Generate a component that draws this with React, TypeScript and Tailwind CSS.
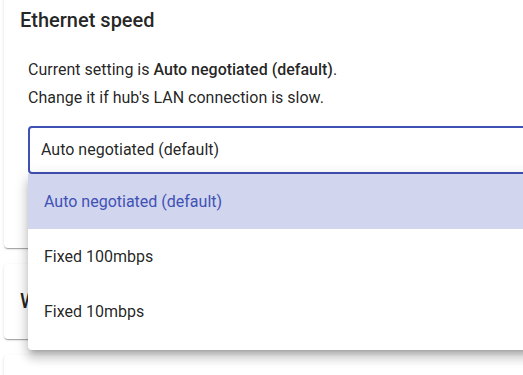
const cardShadow =
  'shadow-[0_2px_1px_-1px_rgba(0,0,0,0.2),0_1px_1px_0_rgba(0,0,0,0.14),0_1px_3px_0_rgba(0,0,0,0.12)]';

const options = ['Auto negotiated (default)', 'Fixed 100mbps', 'Fixed 10mbps'];

export default function App() {
  const selected = options[0];

  return (
    <div className="relative w-[523px] h-[375px] overflow-hidden bg-white font-['Roboto',sans-serif] text-[rgba(0,0,0,0.87)]">
      <div className="flex flex-col gap-4 ml-1 w-[640px] -mt-[17px]">
        {/* Ethernet card */}
        <div className={`rounded bg-white ${cardShadow} pt-[25px] pl-4 h-[265px]`}>
          <h2 className="text-[20px] leading-6 font-medium">Ethernet speed</h2>
          <div className="pl-2 mt-[24px] text-[16px] leading-[28px]">
            <p>
              Current setting is <span className="font-medium">{selected}</span>.
            </p>
            <p>Change it if hub's LAN connection is slow.</p>
          </div>
          <div className="ml-2 mt-[14px] h-12 rounded border-2 border-[#3f51b5] pl-[11px] text-[16px] leading-[44px]">
            {selected}
          </div>
        </div>

        {/* Next card, mostly hidden by the menu */}
        <div className={`rounded bg-white ${cardShadow} pt-[25px] pl-4 h-[75px]`}>
          <h2 className="text-[20px] leading-6 font-medium">Wi-Fi</h2>
        </div>

        <div className={`rounded bg-white ${cardShadow} h-[80px]`} />
      </div>

      {/* open dropdown menu */}
      <ul className="absolute left-[28px] top-[174px] w-[560px] rounded bg-white pb-[11px] shadow-[0_5px_5px_-3px_rgba(0,0,0,0.2),0_8px_10px_1px_rgba(0,0,0,0.14),0_3px_14px_2px_rgba(0,0,0,0.12)]">
        {options.map((o) => (
          <li
            key={o}
            className={`h-[55px] pl-4 flex items-center text-[16px] ${
              o === selected ? 'bg-[#d1d5ed] text-[#3f51b5]' : ''
            }`}
          >
            {o}
          </li>
        ))}
      </ul>
    </div>
  );
}
